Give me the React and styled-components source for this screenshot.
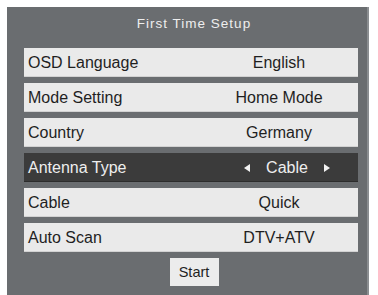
import React from 'react'
import styled, { createGlobalStyle } from 'styled-components'

const Global = createGlobalStyle`
  body {
    margin: 0;
    background: #ffffff;
    font-family: "Liberation Sans", Arial, sans-serif;
  }
`

const Page = styled.div`
  width: 378px;
  height: 295px;
  overflow: hidden;
  padding: 7px 0 0 7px;
  box-sizing: border-box;
`

const Panel = styled.div`
  width: 362px;
  height: 300px;
  box-sizing: border-box;
  background: #6a6d70;
  border-right: 2px solid #8b8e91;
  padding: 0 9px 0 17px;
  display: flex;
  flex-direction: column;
`

const Title = styled.div`
  height: 34px;
  line-height: 34px;
  text-align: center;
  color: #eeeeee;
  font-size: 13.5px;
  letter-spacing: 1px;
  padding-left: 6px;
  margin-bottom: 7px;
`

const List = styled.div`
  display: flex;
  flex-direction: column;
  gap: 6px;
`

const Row = styled.div`
  height: 29px;
  box-sizing: border-box;
  display: flex;
  align-items: center;
  justify-content: space-between;
  padding: 1px 30px 0 4px;
  font-size: 16px;
  background: ${props => props.active ? '#3b3b3b' : '#eaeaea'};
  color: ${props => props.active ? '#eeeeee' : '#1f1f1f'};
  border-bottom: 1px solid ${props => props.active ? '#2c2c2c' : '#d2d2d2'};
`

const Label = styled.span``

const Value = styled.span`
  width: 98px;
  display: flex;
  align-items: center;
  justify-content: ${props => props.arrows ? 'space-between' : 'center'};
  padding: ${props => props.arrows ? '0 0 0 12px' : '0'};
  margin-right: ${props => props.arrows ? '-2px' : '0'};
  box-sizing: border-box;
`

const Arrow = styled.span`
  width: 0;
  height: 0;
  border-top: 4px solid transparent;
  border-bottom: 4px solid transparent;
  ${props => props.left
    ? 'border-right: 6px solid #f2f2f2;'
    : 'border-left: 6px solid #f2f2f2;'}
`

const StartButton = styled.div`
  align-self: center;
  margin: 6px 0 0 6px;
  width: 49px;
  height: 28px;
  line-height: 28px;
  text-align: center;
  background: #ececec;
  color: #1f1f1f;
  font-size: 14.5px;
`

const items = [
  { label: 'OSD Language', value: 'English' },
  { label: 'Mode Setting', value: 'Home Mode' },
  { label: 'Country', value: 'Germany' },
  { label: 'Antenna Type', value: 'Cable', active: true },
  { label: 'Cable', value: 'Quick' },
  { label: 'Auto Scan', value: 'DTV+ATV' },
]

const App = () => {
  return (
    <Page>
      <Global />
      <Panel>
        <Title>First Time Setup</Title>
        <List>
          {items.map(item => (
            <Row key={item.label} active={item.active}>
              <Label>{item.label}</Label>
              {item.active ? (
                <Value arrows>
                  <Arrow left />
                  {item.value}
                  <Arrow />
                </Value>
              ) : (
                <Value>{item.value}</Value>
              )}
            </Row>
          ))}
        </List>
        <StartButton>Start</StartButton>
      </Panel>
    </Page>
  )
}

export default App
